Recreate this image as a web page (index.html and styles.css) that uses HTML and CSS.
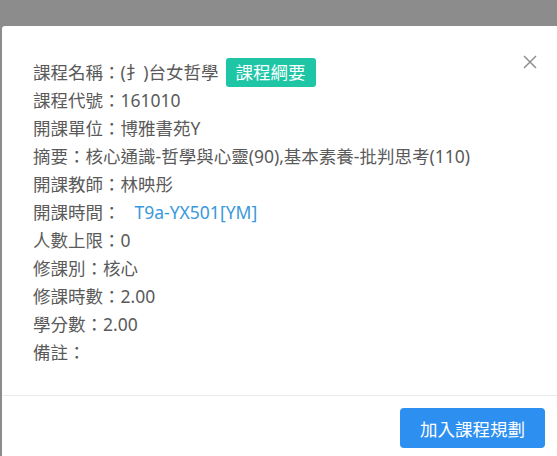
FILE: index.html
```html
<!DOCTYPE html>
<html lang="zh-Hant">
<head>
<meta charset="utf-8">
<title>課程資訊</title>
<link rel="stylesheet" href="styles.css">
</head>
<body>
<div class="overlay">
  <div class="modal">
    <button class="close" aria-label="關閉">
      <svg width="14" height="14" viewBox="0 0 14 14"><path d="M1 1L13 13M13 1L1 13" stroke="#8f8f8f" stroke-width="1.5" fill="none"/></svg>
    </button>
    <div class="modal-body">
      <div class="row">課程名稱：(扌)台女哲學<span class="tag">課程綱要</span></div>
      <div class="row">課程代號：161010</div>
      <div class="row">開課單位：博雅書苑Y</div>
      <div class="row">摘要：核心通識-哲學與心靈(90),基本素養-批判思考(110)</div>
      <div class="row">開課教師：林映彤</div>
      <div class="row">開課時間：<a class="link" href="#">T9a-YX501[YM]</a></div>
      <div class="row">人數上限：0</div>
      <div class="row">修課別：核心</div>
      <div class="row">修課時數：2.00</div>
      <div class="row">學分數：2.00</div>
      <div class="row">備註：</div>
    </div>
    <div class="modal-footer">
      <button class="btn-primary">加入課程規劃</button>
    </div>
  </div>
</div>
</body>
</html>
```

FILE: styles.css
```css
html, body {
  margin: 0;
  padding: 0;
  height: 100%;
  overflow: hidden;
}
body {
  background: #8c8c8c;
  font-family: "Noto Sans", "Noto Sans CJK TC", sans-serif;
}
.overlay {
  padding-top: 26px;
  padding-left: 2px;
}
.modal {
  position: relative;
  width: 560px;
  height: calc(100vh - 26px);
  background: #fff;
  border-top-left-radius: 3px;
}
.close {
  position: absolute;
  top: 29px;
  right: 25px;
  width: 14px;
  height: 14px;
  padding: 0;
  border: 0;
  background: transparent;
  display: flex;
}
.modal-body {
  padding: 32px 0 29px 31px;
  color: #5a5a5a;
  font-size: 17.5px;
}
.row {
  height: 28px;
  line-height: 28px;
  white-space: nowrap;
  display: flex;
  align-items: center;
}
.tag {
  display: inline-flex;
  align-items: center;
  height: 29px;
  padding: 0 10px;
  margin-left: 7px;
  background: #1ec6a6;
  color: #fff;
  border-radius: 3px;
}
.link {
  margin-left: 14px;
  color: #3a98dc;
  text-decoration: none;
}
.modal-footer {
  border-top: 1px solid #e9eaec;
  padding: 12px 17px 8px 0;
  display: flex;
  justify-content: flex-end;
}
.btn-primary {
  width: 145px;
  height: 40px;
  border: 0;
  border-radius: 4px;
  background: #2d8ff0;
  color: #fff;
  font-family: inherit;
  font-size: 17.5px;
  padding: 0;
}
```
